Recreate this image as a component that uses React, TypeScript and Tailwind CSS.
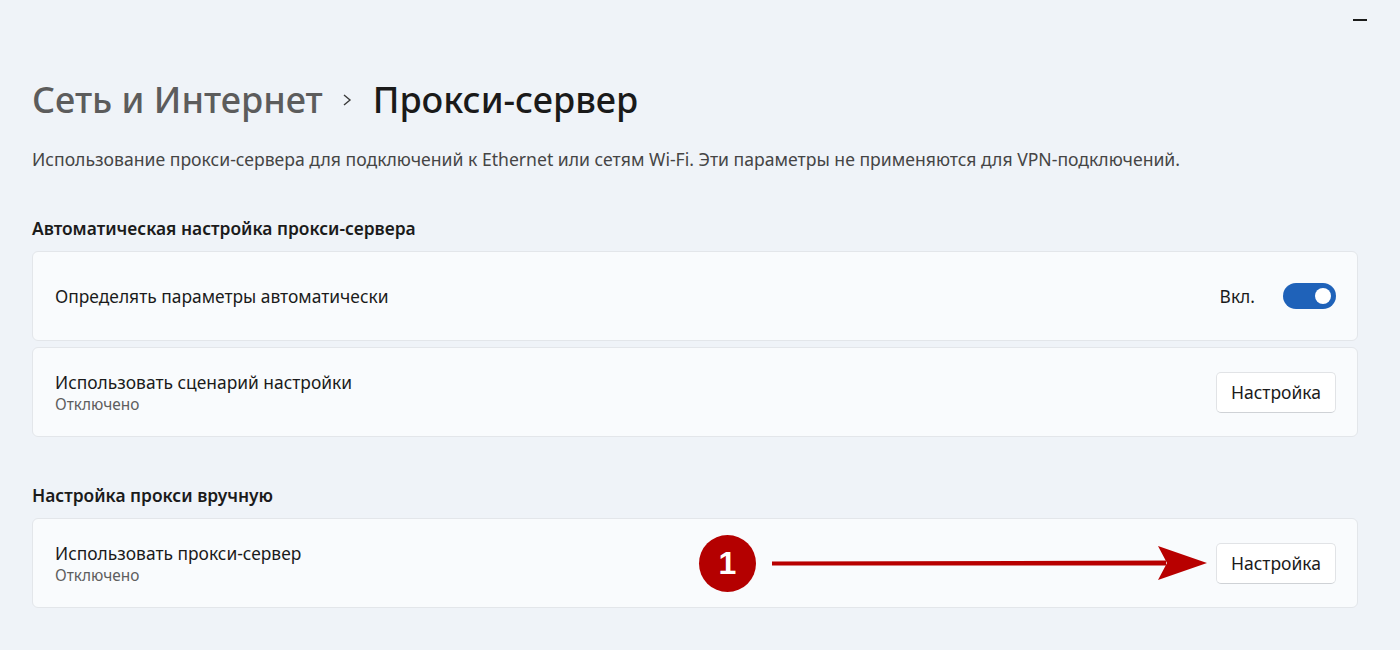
import type { FC, ReactNode } from 'react';

const FONT = { fontFamily: '"Segoe UI", "Noto Sans", "Open Sans", sans-serif' };

const Card: FC<{ children: ReactNode }> = ({ children }) => (
  <div className="flex h-[90px] items-center rounded-md border border-[#e3e6ea] bg-[#f9fbfd] pl-[22px] pr-[21px]">
    {children}
  </div>
);

const SetupButton: FC = () => (
  <button className="h-[41px] w-[120px] rounded-[5px] border border-[#e1e3e6] border-b-[#cfd2d6] bg-white text-[17.5px] text-[#1b1b1b]">
    Настройка
  </button>
);

const Toggle: FC = () => (
  <div className="flex h-[26px] w-[53px] items-center justify-end rounded-full bg-[#1f62b9] pr-[5px]">
    <div className="h-[16px] w-[16px] rounded-full bg-white" />
  </div>
);

const Annotation: FC = () => (
  <div className="flex items-center">
    <div
      className="flex h-[57px] w-[57px] items-center justify-center rounded-full bg-[#b40000] text-[32px] font-bold text-white"
      style={{ fontFamily: '"Liberation Sans", Arial, sans-serif' }}
    >
      1
    </div>
    <svg width="436" height="40" viewBox="0 0 436 40" className="ml-[16px]">
      <path d="M0 18.5 L394 17.5 L394 22.5 L0 22.5 Z" fill="#b80000" />
      <path d="M386 3 L435 20 L386 37 L395 20 Z" fill="#b80000" />
    </svg>
  </div>
);

export default function App() {
  return (
    <div className="h-[650px] w-[1400px] overflow-hidden bg-[#eff3f8]" style={FONT}>
      <div className="flex justify-end pr-[33px] pt-[19px]">
        <div className="h-[2px] w-[14px] bg-[#1b1b1b]" />
      </div>
      <div className="pl-[32px] pr-[42px]">
        <div className="mt-[55px] flex items-center text-[36px] font-medium leading-[48px]">
          <span className="text-[#5c5c5c]">Сеть и Интернет</span>
          <svg width="12" height="14" viewBox="0 0 12 14" className="ml-[18px] mr-[20px]">
            <path d="M3 2 L9 7 L3 12" stroke="#3a3a3a" strokeWidth="1.4" fill="none" />
          </svg>
          <span className="text-[#1a1a1a]">Прокси-сервер</span>
        </div>
        <p className="mt-[23px] text-[17.6px] leading-[24px] text-[#454545]">
          Использование прокси-сервера для подключений к Ethernet или сетям Wi-Fi. Эти параметры не применяются для VPN-подключений.
        </p>
        <h2 className="mt-[45px] text-[17.4px] font-semibold leading-[24px] text-[#1b1b1b]">
          Автоматическая настройка прокси-сервера
        </h2>
        <div className="mt-[11px] flex flex-col gap-[6px]">
          <Card>
            <span className="flex-1 text-[17.4px] text-[#1b1b1b]">Определять параметры автоматически</span>
            <span className="mr-[28px] text-[17.4px] text-[#1b1b1b]">Вкл.</span>
            <Toggle />
          </Card>
          <Card>
            <div className="flex flex-1 flex-col pt-[2px]">
              <span className="text-[17.4px] leading-[24px] text-[#1b1b1b]">Использовать сценарий настройки</span>
              <span className="text-[15.4px] leading-[22px] text-[#5e5e5e]">Отключено</span>
            </div>
            <SetupButton />
          </Card>
        </div>
        <h2 className="mt-[46px] text-[17.4px] font-semibold leading-[24px] text-[#1b1b1b]">
          Настройка прокси вручную
        </h2>
        <div className="mt-[11px]">
          <Card>
            <div className="flex flex-1 flex-col pt-[2px]">
              <span className="text-[17.4px] leading-[24px] text-[#1b1b1b]">Использовать прокси-сервер</span>
              <span className="text-[15.4px] leading-[22px] text-[#5e5e5e]">Отключено</span>
            </div>
            <div className="mr-[8px]">
              <Annotation />
            </div>
            <SetupButton />
          </Card>
        </div>
      </div>
    </div>
  );
}
